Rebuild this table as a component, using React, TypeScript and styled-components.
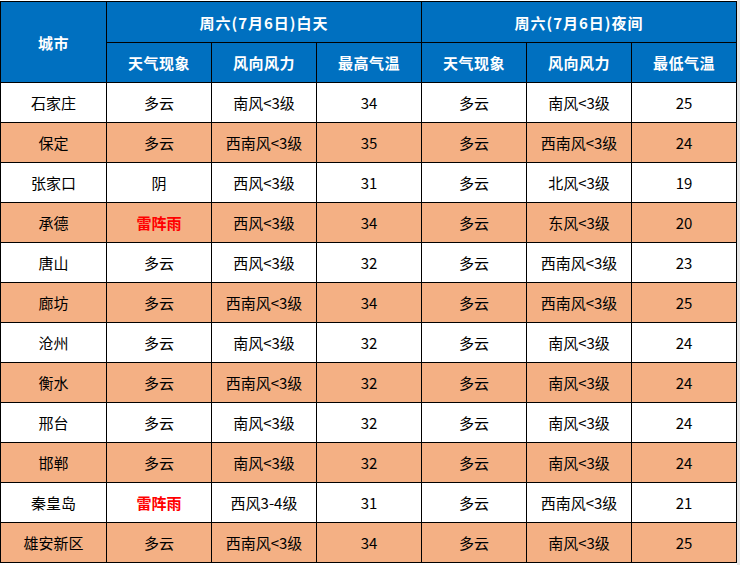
import styled, { createGlobalStyle } from 'styled-components';

const GlobalStyle = createGlobalStyle`
  html, body {
    margin: 0;
    padding: 0;
    background: #ffffff;
  }
  body {
    font-family: "Noto Sans CJK SC", "Liberation Sans", sans-serif;
  }
`;

type Row = {
  city: string;
  dayWeather: string;
  dayWind: string;
  high: string;
  nightWeather: string;
  nightWind: string;
  low: string;
};

const rows: Row[] = [
  { city: '石家庄', dayWeather: '多云', dayWind: '南风<3级', high: '34', nightWeather: '多云', nightWind: '南风<3级', low: '25' },
  { city: '保定', dayWeather: '多云', dayWind: '西南风<3级', high: '35', nightWeather: '多云', nightWind: '西南风<3级', low: '24' },
  { city: '张家口', dayWeather: '阴', dayWind: '西风<3级', high: '31', nightWeather: '多云', nightWind: '北风<3级', low: '19' },
  { city: '承德', dayWeather: '雷阵雨', dayWind: '西风<3级', high: '34', nightWeather: '多云', nightWind: '东风<3级', low: '20' },
  { city: '唐山', dayWeather: '多云', dayWind: '西风<3级', high: '32', nightWeather: '多云', nightWind: '西南风<3级', low: '23' },
  { city: '廊坊', dayWeather: '多云', dayWind: '西南风<3级', high: '34', nightWeather: '多云', nightWind: '西南风<3级', low: '25' },
  { city: '沧州', dayWeather: '多云', dayWind: '南风<3级', high: '32', nightWeather: '多云', nightWind: '南风<3级', low: '24' },
  { city: '衡水', dayWeather: '多云', dayWind: '西南风<3级', high: '32', nightWeather: '多云', nightWind: '南风<3级', low: '24' },
  { city: '邢台', dayWeather: '多云', dayWind: '南风<3级', high: '32', nightWeather: '多云', nightWind: '南风<3级', low: '24' },
  { city: '邯郸', dayWeather: '多云', dayWind: '南风<3级', high: '32', nightWeather: '多云', nightWind: '南风<3级', low: '24' },
  { city: '秦皇岛', dayWeather: '雷阵雨', dayWind: '西风3-4级', high: '31', nightWeather: '多云', nightWind: '西南风<3级', low: '21' },
  { city: '雄安新区', dayWeather: '多云', dayWind: '西南风<3级', high: '34', nightWeather: '多云', nightWind: '南风<3级', low: '25' },
];

const subHeads = ['天气现象', '风向风力', '最高气温', '天气现象', '风向风力', '最低气温'];

const App = () => {
  return (
    <>
      <GlobalStyle />
      <S.Page>
        <S.Table>
          <S.HeadCell $rowSpan={2}>城市</S.HeadCell>
          <S.HeadCell $colSpan={3} $wide>周六(7月6日)白天</S.HeadCell>
          <S.HeadCell $colSpan={3} $wide>周六(7月6日)夜间</S.HeadCell>
          {subHeads.map((h, i) => (
            <S.HeadCell key={i}>{h}</S.HeadCell>
          ))}
          {rows.map((r, i) => {
            const odd = i % 2 === 1;
            return [
              <S.Cell key={`${i}-c`} $odd={odd}>{r.city}</S.Cell>,
              <S.Cell key={`${i}-dw`} $odd={odd} $storm={r.dayWeather === '雷阵雨'}>
                {r.dayWeather}
              </S.Cell>,
              <S.Cell key={`${i}-dd`} $odd={odd}>{r.dayWind}</S.Cell>,
              <S.Cell key={`${i}-h`} $odd={odd}>{r.high}</S.Cell>,
              <S.Cell key={`${i}-nw`} $odd={odd}>{r.nightWeather}</S.Cell>,
              <S.Cell key={`${i}-nd`} $odd={odd}>{r.nightWind}</S.Cell>,
              <S.Cell key={`${i}-l`} $odd={odd}>{r.low}</S.Cell>,
            ];
          })}
        </S.Table>
        <S.Edge />
      </S.Page>
    </>
  );
};

export default App;

const S = {
  Page: styled.div`
    display: flex;
    width: 740px;
    height: 565px;
    overflow: hidden;
  `,
  Table: styled.div`
    display: grid;
    grid-template-columns: 105px repeat(6, 104px);
    grid-template-rows: 40px 39px repeat(12, 39px);
    gap: 1px;
    padding: 1px;
    margin-top: 1px;
    align-self: flex-start;
    background: #000000;
  `,
  HeadCell: styled.div<{ $rowSpan?: number; $colSpan?: number; $wide?: boolean }>`
    grid-row: span ${(p) => p.$rowSpan || 1};
    grid-column: span ${(p) => p.$colSpan || 1};
    display: flex;
    align-items: center;
    justify-content: center;
    background: #0070c0;
    color: #ffffff;
    font-weight: bold;
    font-size: 15px;
    letter-spacing: ${(p) => (p.$wide ? '1px' : '0.5px')};
  `,
  Cell: styled.div<{ $odd: boolean; $storm?: boolean }>`
    display: flex;
    align-items: center;
    justify-content: center;
    background: ${(p) => (p.$odd ? '#f4b084' : '#ffffff')};
    color: ${(p) => (p.$storm ? '#ff0000' : '#000000')};
    font-weight: ${(p) => (p.$storm ? 'bold' : 'normal')};
    font-size: 15px;
  `,
  Edge: styled.div`
    width: 3px;
    height: 565px;
    background: #e6e6e6;
  `,
};
